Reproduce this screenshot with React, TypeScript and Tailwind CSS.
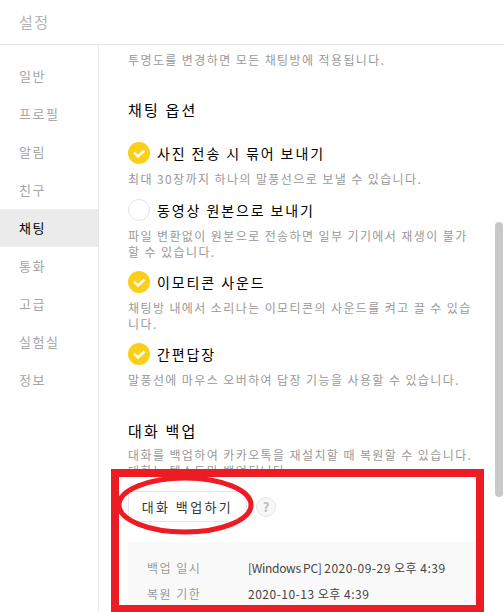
import React from 'react';

const font = { fontFamily: '"Noto Sans CJK KR", "Noto Sans", sans-serif' };

const menu = ['일반', '프로필', '알림', '친구', '채팅', '통화', '고급', '실험실', '정보'];

const Check = ({ on }: { on: boolean }) =>
  on ? (
    <svg width="22" height="22" viewBox="0 0 22 22" className="shrink-0">
      <circle cx="11" cy="11" r="11" fill="#fccf17" />
      <path d="M6 10.5l4 4 6.5-6" fill="none" stroke="#fff" strokeWidth="2.4" />
    </svg>
  ) : (
    <div className="h-[22px] w-[22px] shrink-0 rounded-full border border-[#e4e4e4] bg-white" />
  );

interface OptionProps {
  on: boolean;
  title: string;
  desc: React.ReactNode;
  className?: string;
}

const Option = ({ on, title, desc, className }: OptionProps) => (
  <div className={className}>
    <div className="flex h-[22px] items-center gap-[7px]">
      <Check on={on} />
      <span className="text-[14px] tracking-[1.9px] text-black">{title}</span>
    </div>
    <p className="mt-[7px] whitespace-nowrap text-[12px] leading-[16px] tracking-[1.4px] text-[#999]">{desc}</p>
  </div>
);

export default function App() {
  return (
    <div className="relative h-[612px] w-[504px] overflow-hidden bg-white" style={font}>
      <div className="flex h-[45px] items-center border-b border-[#e6e6e6] pl-[19px] text-[15px] tracking-[1.5px] text-[#b4b4b4]">
        설정
      </div>
      <div className="flex h-[567px]">
        <nav className="w-[99px] shrink-0 border-r border-[#e6e6e6] pt-[12px]">
          {menu.map((m) => (
            <div
              key={m}
              className={
                'flex h-[38px] items-center pl-[19px] text-[13px] tracking-[1.5px] ' +
                (m === '채팅' ? 'bg-[#ebebeb] text-black' : 'text-[#a6a6a6]')
              }
            >
              {m}
            </div>
          ))}
        </nav>
        <main className="w-[350px] pl-[29px] pt-[7px]">
          <p className="text-[12px] leading-[16px] tracking-[1.4px] text-[#999]">
            투명도를 변경하면 모든 채팅방에 적용됩니다.
          </p>
          <h2 className="mt-[32px] text-[15px] leading-[20px] tracking-[2.2px] text-black">채팅 옵션</h2>
          <div className="mt-[22px] flex flex-col">
            <Option on title="사진 전송 시 묶어 보내기" desc="최대 30장까지 하나의 말풍선으로 보낼 수 있습니다." />
            <Option
              className="mt-[12px]"
              on={false}
              title="동영상 원본으로 보내기"
              desc={
                <>
                  파일 변환없이 원본으로 전송하면 일부 기기에서 재생이 불가
                  <br />할 수 있습니다.
                </>
              }
            />
            <Option
              className="mt-[11px]"
              on
              title="이모티콘 사운드"
              desc={
                <>
                  채팅방 내에서 소리나는 이모티콘의 사운드를 켜고 끌 수 있습
                  <br />니다.
                </>
              }
            />
            <Option
              className="mt-[11px]"
              on
              title="간편답장"
              desc="말풍선에 마우스 오버하여 답장 기능을 사용할 수 있습니다."
            />
          </div>
          <h2 className="mt-[33px] text-[15px] leading-[20px] tracking-[2.2px] text-black">대화 백업</h2>
          <p className="mt-[6px] whitespace-nowrap text-[12px] leading-[16px] tracking-[1.4px] text-[#999]">
            대화를 백업하여 카카오톡을 재설치할 때 복원할 수 있습니다.
            <br />
            대화는 텍스트만 백업됩니다.
          </p>
          <div className="mt-[12px] flex items-center gap-[9px]">
            <button className="h-[31px] w-[119px] rounded-[2px] border border-[#e6e6e6] bg-white text-[13px] tracking-[2.4px] text-[#333]">
              대화 백업하기
            </button>
            <span className="flex h-[20px] w-[20px] items-center justify-center rounded-full border border-[#e6e6e6] bg-[#f7f7f7] text-[13px] font-bold text-[#bdbdbd]">
              ?
            </span>
          </div>
          <div className="mt-[20px] w-[348px] bg-[#f9f9f9] pl-[19px] pt-[13px] text-[12px] leading-[26px]">
            <div className="flex">
              <span className="w-[101px] tracking-[1.5px] text-[#999]">백업 일시</span>
              <span className="text-[#444]">
                <span className="tracking-[-0.3px]">[Windows PC]</span>{' '}
                <span className="tracking-[0.5px]">2020-09-29 오후 4:39</span>
              </span>
            </div>
            <div className="flex pb-[8px]">
              <span className="w-[101px] tracking-[1.5px] text-[#999]">복원 기한</span>
              <span className="tracking-[0.5px] text-[#444]">2020-10-13 오후 4:39</span>
            </div>
          </div>
        </main>
      </div>
      {/* scrollbar */}
      <div className="absolute left-[495px] top-[222px] h-[275px] w-[8px] rounded-[4px] bg-[#c8c8c8]" />
      {/* red markup over the screenshot */}
      <div className="absolute left-[111px] top-[469px] h-[144px] w-[373px] border-[8px] border-[#ed1c24]" />
      <svg className="absolute left-[115px] top-[473px]" width="142" height="64" viewBox="0 0 142 64">
        <ellipse cx="70" cy="32" rx="66" ry="27" fill="none" stroke="#ed1c24" strokeWidth="5" />
      </svg>
    </div>
  );
}
